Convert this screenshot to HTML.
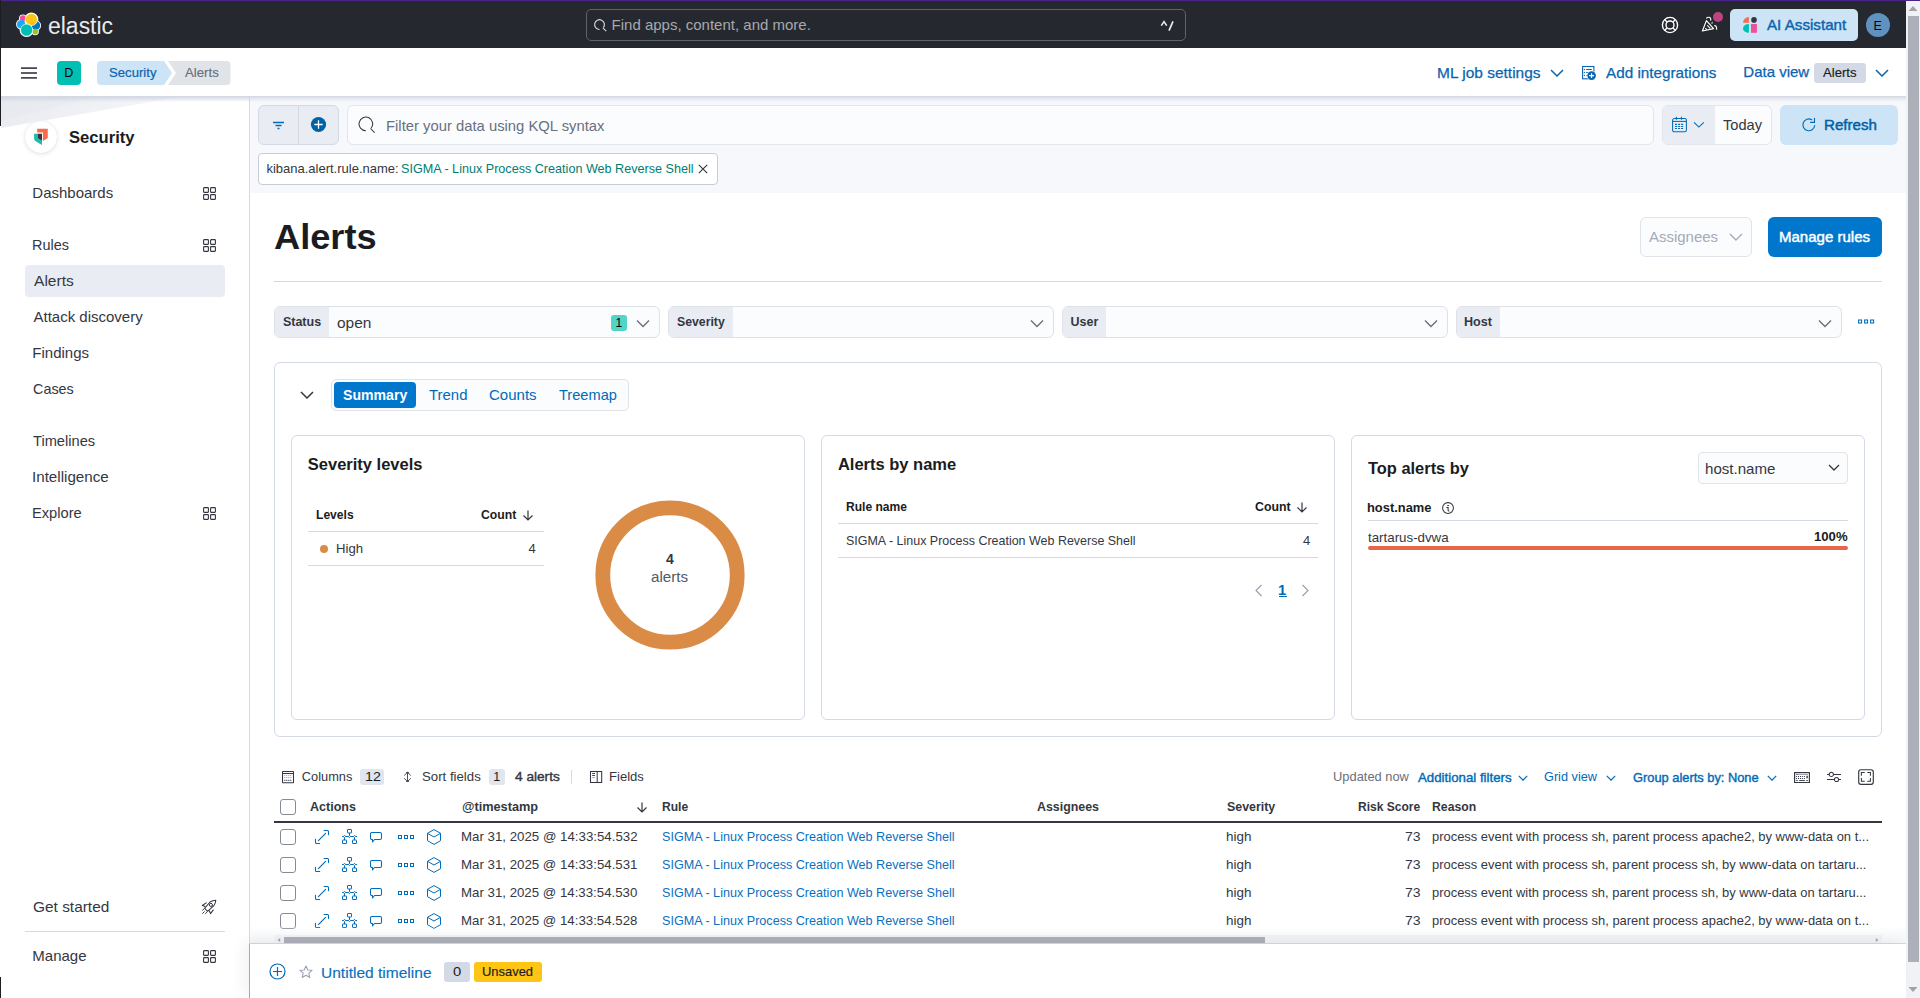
<!DOCTYPE html>
<html><head><meta charset="utf-8"><title>Alerts - Kibana</title>
<style>
html,body{margin:0;padding:0;width:1920px;height:998px;overflow:hidden;background:#fff;}
body{position:relative;font-family:"Liberation Sans",sans-serif;}
.t{position:absolute;white-space:nowrap;line-height:1;}
.b{position:absolute;display:block;}
</style></head><body>
<div class="b" style="left:0px;top:0px;width:1906px;height:48px;background:#25282f;"></div>
<div class="b" style="left:0px;top:0px;width:1920px;height:1px;background:#4a238c;"></div>
<div class="b" style="left:0px;top:0px;width:1px;height:126px;background:#1d1e22;"></div>
<svg class="b" style="left:16px;top:12px;" width="26" height="26" viewBox="0 0 26 26">
<g fill="#fff" stroke="#fff" stroke-width="1.8"><circle cx="6.9" cy="6.3" r="3"/><circle cx="5.2" cy="12.2" r="4.3"/><circle cx="19.8" cy="13.4" r="4.4"/><circle cx="19.2" cy="19.6" r="2.8"/><circle cx="15.35" cy="7.5" r="6.1"/><circle cx="10.6" cy="18.1" r="6.1"/></g>
<circle cx="6.9" cy="6.3" r="3" fill="#f04e98"/>
<circle cx="5.2" cy="12.2" r="4.3" fill="#1ba9f5"/>
<circle cx="19.8" cy="13.4" r="4.4" fill="#0077cc"/>
<circle cx="19.2" cy="19.6" r="2.8" fill="#93c90e"/>
<circle cx="15.35" cy="7.5" r="6.1" fill="#fec514" stroke="#fff" stroke-width="0.7"/>
<circle cx="10.6" cy="18.1" r="6.1" fill="#00bfb3" stroke="#fff" stroke-width="0.7"/>
</svg>
<div class="t" style="left:48.48px;top:15px;font-size:23.5px;color:#ebebeb;transform:scaleX(0.9770);transform-origin:0 0;">elastic</div>
<div class="b" style="left:586px;top:9px;width:600px;height:32px;border:1px solid #5f636b;border-radius:5px;box-sizing:border-box;background:#25282f;"></div>
<svg class="b" style="left:593px;top:18px;" width="15" height="15" viewBox="0 0 15 15"><path d="M6.6 11.5 A4.9 4.9 0 1 1 10.35 9.65" fill="none" stroke="#d4d6da" stroke-width="1.15"/><path d="M9.9 9.9 L13.3 13.2" stroke="#d4d6da" stroke-width="1.15"/></svg>
<div class="t" style="left:611.55px;top:17px;font-size:15px;color:#a7a9ae;">Find apps, content, and more.</div>
<svg class="b" style="left:1159px;top:19px;" width="16" height="14" viewBox="0 0 16 14"><path d="M2.3 6.6 L5 2.6 L7.7 6.6" fill="none" stroke="#e8ebf0" stroke-width="1.6"/><path d="M10 11.6 L14 2.4" stroke="#e8ebf0" stroke-width="1.7"/></svg>
<svg class="b" style="left:1661px;top:16px;" width="18" height="18" viewBox="0 0 18 18"><circle cx="9" cy="9" r="7.6" fill="none" stroke="#fff" stroke-width="1.4"/><circle cx="9" cy="9" r="4" fill="none" stroke="#fff" stroke-width="1.4"/><path d="M3.6 3.6L6.2 6.2M14.4 3.6L11.8 6.2M3.6 14.4L6.2 11.8M14.4 14.4L11.8 11.8" stroke="#fff" stroke-width="1.4"/></svg>
<svg class="b" style="left:1700px;top:15px;" width="20" height="20" viewBox="0 0 20 20"><path d="M2.4 16 L6.4 5.6 L13.6 13.6 Z" fill="none" stroke="#fff" stroke-width="1.2" stroke-linejoin="round"/><path d="M7.3 10.3 L10.3 13.3 M5.3 13.2 L6.8 14.6" stroke="#fff" stroke-width="1.1"/><path d="M6.2 3.4 Q8.2 1.6 10 2.6 Q11.2 3.6 10.6 5.6" fill="none" stroke="#fff" stroke-width="1.2"/><path d="M14.3 10.6 Q16.9 10.2 16.6 14.8" fill="none" stroke="#fff" stroke-width="1.2"/><path d="M10.6 8.6 L12.6 6.6 L12.9 8.4 Z" fill="#cfd2d6"/></svg>
<div class="b" style="left:1712.8px;top:11.7px;width:10.4px;height:10.4px;border-radius:50%;background:#bf4380;"></div>
<div class="b" style="left:1730px;top:9px;width:128px;height:32px;background:#cce4f5;border-radius:5px;"></div>
<svg class="b" style="left:1742px;top:16px;" width="17" height="18" viewBox="0 0 17 18"><path d="M6.9 1 V6.8 H1 A5.9 5.8 0 0 1 6.9 1 Z" fill="#f86b4b"/><circle cx="12" cy="3.9" r="2.8" fill="#343741"/><path d="M6.9 8 V16.8 A5.9 4.4 0 0 1 6.9 8 Z" fill="#00bfb3"/><rect x="9" y="8" width="5.9" height="8.8" fill="#f04e98"/></svg>
<div class="t" style="left:1766.70px;top:18px;font-size:14.8px;color:#0b64b0;transform:scaleX(1.0249);transform-origin:0 0;-webkit-text-stroke:0.4px #0b64b0;">AI Assistant</div>
<div class="b" style="left:1866px;top:13px;width:24px;height:24px;border-radius:50%;background:#6092c0;"></div>
<div class="t" style="left:1873.59px;top:20px;font-size:12.5px;color:#000;">E</div>
<div class="b" style="left:1906px;top:1px;width:14px;height:997px;background:#f1f2f6;"></div>
<div class="b" style="left:1908px;top:16px;width:11px;height:946px;background:#adb0b9;"></div>
<svg class="b" style="left:1908px;top:5px;" width="10" height="7" viewBox="0 0 10 7"><path d="M0.5 6 L5 1 L9.5 6 Z" fill="#a3a3a3"/></svg>
<svg class="b" style="left:1908px;top:986px;" width="10" height="7" viewBox="0 0 10 7"><path d="M0.5 1 L5 6 L9.5 1 Z" fill="#a3a3a3"/></svg>
<div class="b" style="left:1px;top:48px;width:1905px;height:48px;background:#fff;"></div>
<div class="b" style="left:1px;top:96px;width:1905px;height:1px;background:#d3dae6;"></div>
<svg class="b" style="left:21px;top:67px;" width="16" height="12" viewBox="0 0 16 12"><rect x="0" y="0.3" width="16" height="1.6" fill="#343741"/><rect x="0" y="5.2" width="16" height="1.6" fill="#343741"/><rect x="0" y="10.1" width="16" height="1.6" fill="#343741"/></svg>
<div class="b" style="left:57px;top:61px;width:24px;height:24px;background:#00bfb3;border-radius:4px;"></div>
<div class="t" style="left:64.28px;top:67px;font-size:12.5px;color:#000;">D</div>
<svg class="b" style="left:97px;top:61px;" width="134" height="24" viewBox="0 0 134 24"><path d="M4 0 H67 L75 12 L67 24 H4 A4 4 0 0 1 0 20 V4 A4 4 0 0 1 4 0 Z" fill="#cce4f5"/><path d="M71 0 H129.5 A4 4 0 0 1 133.5 4 V20 A4 4 0 0 1 129.5 24 H71 L79 12 Z" fill="#e0e3e8"/></svg>
<div class="t" style="left:108.81px;top:66px;font-size:13px;color:#0b64b0;transform:scaleX(1.0109);transform-origin:0 0;-webkit-text-stroke:0.2px #0b64b0;">Security</div>
<div class="t" style="left:184.75px;top:66px;font-size:13px;color:#69707d;transform:scaleX(1.0150);transform-origin:0 0;-webkit-text-stroke:0.15px #69707d;">Alerts</div>
<div class="t" style="left:1437.26px;top:65px;font-size:15px;color:#0b64b0;transform:scaleX(1.0322);transform-origin:0 0;-webkit-text-stroke:0.25px #0b64b0;">ML job settings</div>
<svg class="b" style="left:1550px;top:69px;" width="14" height="8" viewBox="0 0 14 8"><path d="M1 1 L7 7 L13 1" fill="none" stroke="#0b64b0" stroke-width="1.5"/></svg>
<svg class="b" style="left:1581px;top:65px;" width="17" height="17" viewBox="0 0 17 17"><rect x="1.6" y="1.5" width="11.3" height="12.3" fill="none" stroke="#0b64b0" stroke-width="1.1"/><circle cx="3.4" cy="4.5" r="0.65" fill="#0b64b0"/><circle cx="3.4" cy="7.5" r="0.65" fill="#0b64b0"/><circle cx="3.4" cy="10.5" r="0.65" fill="#0b64b0"/><path d="M5.2 4.5 H10.8 M5.2 7.5 H8 M5.2 10.5 H7" stroke="#0b64b0" stroke-width="1.05"/><circle cx="10.6" cy="10.6" r="4.9" fill="#fff"/><circle cx="10.6" cy="10.6" r="4.3" fill="#0b64b0"/><path d="M10.6 8.2 V13 M8.2 10.6 H13" stroke="#fff" stroke-width="1.15"/></svg>
<div class="t" style="left:1605.50px;top:65px;font-size:15px;color:#0b64b0;transform:scaleX(1.0181);transform-origin:0 0;-webkit-text-stroke:0.25px #0b64b0;">Add integrations</div>
<div class="t" style="left:1743.30px;top:64px;font-size:15px;color:#0b64b0;-webkit-text-stroke:0.25px #0b64b0;">Data view</div>
<div class="b" style="left:1814px;top:63px;width:52px;height:20px;background:#d3dae6;border-radius:3px;"></div>
<div class="t" style="left:1823.00px;top:67px;font-size:12.5px;color:#1a1c21;transform:scaleX(1.0476);transform-origin:0 0;-webkit-text-stroke:0.15px #1a1c21;">Alerts</div>
<svg class="b" style="left:1875px;top:69px;" width="14" height="8" viewBox="0 0 14 8"><path d="M1 1 L7 7 L13 1" fill="none" stroke="#0b64b0" stroke-width="1.5"/></svg>
<div class="b" style="left:1px;top:97px;width:248px;height:901px;background:#fff;"></div>
<div class="b" style="left:249px;top:97px;width:1px;height:901px;background:#d3dae6;"></div>
<div class="b" style="left:25px;top:121px;width:32px;height:32px;border-radius:50%;background:#fff;box-shadow:0 1px 4px rgba(0,0,0,0.12), 0 0 1px rgba(0,0,0,0.1);"></div>
<svg class="b" style="left:33px;top:128px;" width="16" height="18" viewBox="0 0 16 18"><path d="M4.2 0.85 H14.75 V10 L9.9 12.9 V4.4 H4.2 Z" fill="#f86b4b"/><path d="M1.1 5.8 H4.8 V10.3 L9 12.8 V16.9 L2.6 13.2 Q1.1 12.3 1.1 10.8 Z" fill="#1ebbaf"/><path d="M4.8 5.8 H9 V12.8 L4.8 10.3 Z" fill="#343741"/></svg>
<div class="t" style="left:68.90px;top:129px;font-size:16.5px;color:#1a1c21;font-weight:700;transform:scaleX(1.0060);transform-origin:0 0;">Security</div>
<div class="b" style="left:25px;top:265px;width:200px;height:32px;background:#e9edf3;border-radius:4px;"></div>
<div class="t" style="left:32.30px;top:185px;font-size:15px;color:#343741;">Dashboards</div>
<svg class="b" style="left:203px;top:186.5px;" width="13" height="13" viewBox="0 0 13 13"><rect x="0.6" y="0.6" width="4.8" height="4.8" rx="0.6" fill="none" stroke="#343741" stroke-width="1.1"/><rect x="7.6" y="0.6" width="4.8" height="4.8" rx="0.6" fill="none" stroke="#343741" stroke-width="1.1"/><rect x="0.6" y="7.6" width="4.8" height="4.8" rx="0.6" fill="none" stroke="#343741" stroke-width="1.1"/><rect x="7.6" y="7.6" width="4.8" height="4.8" rx="0.6" fill="none" stroke="#343741" stroke-width="1.1"/></svg>
<div class="t" style="left:32.35px;top:237px;font-size:15px;color:#343741;transform:scaleX(0.9617);transform-origin:0 0;">Rules</div>
<svg class="b" style="left:203px;top:238.5px;" width="13" height="13" viewBox="0 0 13 13"><rect x="0.6" y="0.6" width="4.8" height="4.8" rx="0.6" fill="none" stroke="#343741" stroke-width="1.1"/><rect x="7.6" y="0.6" width="4.8" height="4.8" rx="0.6" fill="none" stroke="#343741" stroke-width="1.1"/><rect x="0.6" y="7.6" width="4.8" height="4.8" rx="0.6" fill="none" stroke="#343741" stroke-width="1.1"/><rect x="7.6" y="7.6" width="4.8" height="4.8" rx="0.6" fill="none" stroke="#343741" stroke-width="1.1"/></svg>
<div class="t" style="left:33.50px;top:273px;font-size:15px;color:#343741;transform:scaleX(1.0370);transform-origin:0 0;">Alerts</div>
<div class="t" style="left:33.50px;top:309px;font-size:15px;color:#343741;">Attack discovery</div>
<div class="t" style="left:32.30px;top:345px;font-size:15px;color:#343741;">Findings</div>
<div class="t" style="left:32.78px;top:381px;font-size:15px;color:#343741;transform:scaleX(0.9600);transform-origin:0 0;">Cases</div>
<div class="t" style="left:33.21px;top:433px;font-size:15px;color:#343741;transform:scaleX(0.9765);transform-origin:0 0;">Timelines</div>
<div class="t" style="left:32.13px;top:469px;font-size:15px;color:#343741;transform:scaleX(1.0112);transform-origin:0 0;">Intelligence</div>
<div class="t" style="left:32.33px;top:505px;font-size:15px;color:#343741;transform:scaleX(0.9781);transform-origin:0 0;">Explore</div>
<svg class="b" style="left:203px;top:506.5px;" width="13" height="13" viewBox="0 0 13 13"><rect x="0.6" y="0.6" width="4.8" height="4.8" rx="0.6" fill="none" stroke="#343741" stroke-width="1.1"/><rect x="7.6" y="0.6" width="4.8" height="4.8" rx="0.6" fill="none" stroke="#343741" stroke-width="1.1"/><rect x="0.6" y="7.6" width="4.8" height="4.8" rx="0.6" fill="none" stroke="#343741" stroke-width="1.1"/><rect x="7.6" y="7.6" width="4.8" height="4.8" rx="0.6" fill="none" stroke="#343741" stroke-width="1.1"/></svg>
<div class="t" style="left:32.73px;top:899px;font-size:15px;color:#343741;transform:scaleX(1.0283);transform-origin:0 0;">Get started</div>
<svg class="b" style="left:201px;top:899px;" width="16" height="16" viewBox="0 0 16 16"><path d="M3.6 9.4 L9 3 Q11.8 1.3 14.8 1.2 Q14.7 4.2 12.8 6.7 L6.6 12.4 Z" fill="none" stroke="#343741" stroke-width="1.05" stroke-linejoin="round"/><path d="M5.6 3.6 L1.3 6.5 L4.3 7.6 M12.5 10.6 L9.5 14.6 L8.3 11.5" fill="none" stroke="#343741" stroke-width="1.05" stroke-linejoin="round"/><circle cx="9.9" cy="5.9" r="1.55" fill="none" stroke="#343741" stroke-width="1"/><path d="M1.3 11.4 L3.4 9.5 M1.3 14.7 L3.6 12.4 M4.3 14.7 L6.2 13" stroke="#343741" stroke-width="1"/></svg>
<div class="b" style="left:25px;top:931px;width:200px;height:1px;background:#d3dae6;"></div>
<div class="t" style="left:32.30px;top:948px;font-size:15px;color:#343741;">Manage</div>
<svg class="b" style="left:203px;top:949.5px;" width="13" height="13" viewBox="0 0 13 13"><rect x="0.6" y="0.6" width="4.8" height="4.8" rx="0.6" fill="none" stroke="#343741" stroke-width="1.1"/><rect x="7.6" y="0.6" width="4.8" height="4.8" rx="0.6" fill="none" stroke="#343741" stroke-width="1.1"/><rect x="0.6" y="7.6" width="4.8" height="4.8" rx="0.6" fill="none" stroke="#343741" stroke-width="1.1"/><rect x="7.6" y="7.6" width="4.8" height="4.8" rx="0.6" fill="none" stroke="#343741" stroke-width="1.1"/></svg>
<div class="b" style="left:0px;top:977px;width:1px;height:21px;background:#1d1e22;"></div>
<svg class="b" style="left:1px;top:97px;" width="249" height="34" viewBox="0 0 249 34"><defs><linearGradient id="wg" x1="0" y1="0" x2="1" y2="0.3"><stop offset="0" stop-color="#e3e6ed"/><stop offset="1" stop-color="#f6f7fa"/></linearGradient></defs><path d="M0 0 H178 L0 31 Z" fill="url(#wg)" opacity="0.9"/><path d="M0 0 H92 L0 24 Z" fill="#e6e9ef" opacity="0.6"/></svg>
<div class="b" style="left:1px;top:97px;width:249px;height:5px;background:linear-gradient(rgba(205,210,220,0.8),rgba(255,255,255,0));"></div>
<div class="b" style="left:250px;top:97px;width:1656px;height:96px;background:#f7f8fc;"></div>
<div class="b" style="left:250px;top:97px;width:1656px;height:5px;background:linear-gradient(rgba(200,205,215,0.55),rgba(247,248,252,0));"></div>
<div class="b" style="left:258px;top:105px;width:81px;height:40px;background:#e9edf3;border:1px solid #d3dae6;border-radius:6px;box-sizing:border-box;"></div>
<div class="b" style="left:298px;top:105px;width:1px;height:40px;background:#d3dae6;"></div>
<svg class="b" style="left:272px;top:121px;" width="13" height="9" viewBox="0 0 13 9"><path d="M1 1.5 H12 M3.5 4.5 H9.5 M5.5 7.5 H7.5" stroke="#006bb8" stroke-width="1.4"/></svg>
<svg class="b" style="left:310px;top:116px;" width="17" height="17" viewBox="0 0 17 17"><circle cx="8.5" cy="8.5" r="7.6" fill="#0061a6"/><path d="M8.5 4.3 V12.7 M4.3 8.5 H12.7" stroke="#fff" stroke-width="1.3"/></svg>
<div class="b" style="left:347px;top:105px;width:1307px;height:40px;background:#fbfcfd;border:1px solid #e1e5ec;border-radius:6px;box-sizing:border-box;"></div>
<svg class="b" style="left:358px;top:116px;" width="18" height="18" viewBox="0 0 18 18"><path d="M7.85 14.65 A6.8 6.8 0 1 1 13.06 12.22" fill="none" stroke="#343741" stroke-width="1.05"/><path d="M12.5 12.5 L16.6 16.6" stroke="#343741" stroke-width="1.05"/></svg>
<div class="t" style="left:386.31px;top:118px;font-size:15px;color:#69707d;transform:scaleX(0.9877);transform-origin:0 0;">Filter your data using KQL syntax</div>
<div class="b" style="left:1662px;top:105px;width:110px;height:40px;background:#fbfcfd;border:1px solid #e1e5ec;border-radius:6px;box-sizing:border-box;"></div>
<div class="b" style="left:1663px;top:106px;width:52px;height:38px;background:#e9edf3;border-radius:5px 0 0 5px;"></div>
<svg class="b" style="left:1671px;top:116px;" width="16" height="17" viewBox="0 0 16 17"><rect x="1.6" y="2.5" width="13.8" height="13.3" rx="1.8" fill="none" stroke="#006bb8" stroke-width="1.05"/><path d="M1.6 5.4 H15.4" stroke="#006bb8" stroke-width="1.05"/><path d="M5.4 0.8 V3.8 M10.5 0.8 V3.8" stroke="#006bb8" stroke-width="1.1"/><path d="M4 8.4 h2 M7.1 8.4 h2 M10.1 8.4 h2 M4 10.5 h2 M7.1 10.5 h2 M10.1 10.5 h2 M4 12.5 h2 M7.1 12.5 h2 M10.1 12.5 h2" stroke="#006bb8" stroke-width="1.1"/></svg>
<svg class="b" style="left:1693px;top:121px;" width="12" height="8" viewBox="0 0 12 8"><path d="M1 1.3 L5.9 6.1 L10.8 1.3" fill="none" stroke="#006bb8" stroke-width="1.1"/></svg>
<div class="t" style="left:1723.41px;top:118px;font-size:14.5px;color:#343741;transform:scaleX(1.0072);transform-origin:0 0;">Today</div>
<div class="b" style="left:1780px;top:105px;width:118px;height:40px;background:#cce4f5;border-radius:6px;"></div>
<svg class="b" style="left:1801px;top:117px;" width="16" height="16" viewBox="0 0 16 16"><path d="M13.68 8.6 A5.9 5.9 0 1 1 10.75 2.69" fill="none" stroke="#006bb8" stroke-width="1.1" stroke-linecap="round"/><path d="M13.5 1.2 V5.4 H9.6" fill="none" stroke="#006bb8" stroke-width="1.1" stroke-linecap="round"/></svg>
<div class="t" style="left:1824.39px;top:118px;font-size:14.8px;color:#0061a6;transform:scaleX(1.0211);transform-origin:0 0;-webkit-text-stroke:0.45px #0061a6;">Refresh</div>
<div class="b" style="left:258px;top:153px;width:460px;height:32px;background:#fff;border:1px solid #c6ccd6;border-radius:4px;box-sizing:border-box;"></div>
<div class="t" style="left:266.40px;top:162px;font-size:13px;color:#343741;">kibana.alert.rule.name:</div>
<div class="t" style="left:401.03px;top:162px;font-size:13px;color:#017d73;transform:scaleX(0.9694);transform-origin:0 0;">SIGMA - Linux Process Creation Web Reverse Shell</div>
<svg class="b" style="left:698px;top:164px;" width="10" height="10" viewBox="0 0 10 10"><path d="M0.8 0.8 L9.2 9.2 M9.2 0.8 L0.8 9.2" stroke="#343741" stroke-width="1.1"/></svg>
<div class="b" style="left:250px;top:193px;width:1656px;height:750px;background:#fff;"></div>
<div class="t" style="left:273.99px;top:219px;font-size:35px;color:#1a1c21;font-weight:700;transform:scaleX(1.0346);transform-origin:0 0;">Alerts</div>
<div class="b" style="left:1640px;top:217px;width:112px;height:40px;background:#fbfcfd;border:1px solid #e0e3e8;border-radius:6px;box-sizing:border-box;"></div>
<div class="t" style="left:1649.40px;top:230px;font-size:14.8px;color:#a2abba;transform:scaleX(1.0106);transform-origin:0 0;">Assignees</div>
<svg class="b" style="left:1729px;top:233px;" width="14" height="8" viewBox="0 0 14 8"><path d="M1 1 L7 7 L13 1" fill="none" stroke="#a2abba" stroke-width="1.4"/></svg>
<div class="b" style="left:1768px;top:217px;width:114px;height:40px;background:#0077cc;border-radius:6px;"></div>
<div class="t" style="left:1779.30px;top:230px;font-size:14.8px;color:#ffffff;transform:scaleX(1.0149);transform-origin:0 0;-webkit-text-stroke:0.45px #ffffff;">Manage rules</div>
<div class="b" style="left:274px;top:281px;width:1608px;height:1px;background:#d3dae6;"></div>
<div class="b" style="left:274px;top:306px;width:386px;height:32px;background:#fbfcfd;border:1px solid #dde1e8;border-radius:6px;box-sizing:border-box;"></div>
<div class="b" style="left:275px;top:307px;width:54px;height:30px;background:#e9edf3;border-radius:5px 0 0 5px;"></div>
<div class="t" style="left:282.93px;top:316px;font-size:12.5px;color:#343741;font-weight:700;">Status</div>
<svg class="b" style="left:636px;top:319px;" width="14" height="9" viewBox="0 0 14 9"><path d="M1 1.5 L7 7.5 L13 1.5" fill="none" stroke="#69707d" stroke-width="1.4"/></svg>
<div class="b" style="left:668px;top:306px;width:386px;height:32px;background:#fbfcfd;border:1px solid #dde1e8;border-radius:6px;box-sizing:border-box;"></div>
<div class="b" style="left:669px;top:307px;width:64px;height:30px;background:#e9edf3;border-radius:5px 0 0 5px;"></div>
<div class="t" style="left:676.93px;top:316px;font-size:12.5px;color:#343741;font-weight:700;transform:scaleX(0.9816);transform-origin:0 0;">Severity</div>
<svg class="b" style="left:1030px;top:319px;" width="14" height="9" viewBox="0 0 14 9"><path d="M1 1.5 L7 7.5 L13 1.5" fill="none" stroke="#69707d" stroke-width="1.4"/></svg>
<div class="b" style="left:1062px;top:306px;width:386px;height:32px;background:#fbfcfd;border:1px solid #dde1e8;border-radius:6px;box-sizing:border-box;"></div>
<div class="b" style="left:1063px;top:307px;width:43px;height:30px;background:#e9edf3;border-radius:5px 0 0 5px;"></div>
<div class="t" style="left:1070.55px;top:316px;font-size:12.5px;color:#343741;font-weight:700;">User</div>
<svg class="b" style="left:1424px;top:319px;" width="14" height="9" viewBox="0 0 14 9"><path d="M1 1.5 L7 7.5 L13 1.5" fill="none" stroke="#69707d" stroke-width="1.4"/></svg>
<div class="b" style="left:1456px;top:306px;width:386px;height:32px;background:#fbfcfd;border:1px solid #dde1e8;border-radius:6px;box-sizing:border-box;"></div>
<div class="b" style="left:1457px;top:307px;width:43px;height:30px;background:#e9edf3;border-radius:5px 0 0 5px;"></div>
<div class="t" style="left:1464.48px;top:316px;font-size:12.5px;color:#343741;font-weight:700;transform:scaleX(1.0070);transform-origin:0 0;">Host</div>
<svg class="b" style="left:1818px;top:319px;" width="14" height="9" viewBox="0 0 14 9"><path d="M1 1.5 L7 7.5 L13 1.5" fill="none" stroke="#69707d" stroke-width="1.4"/></svg>
<div class="t" style="left:336.58px;top:316px;font-size:14.7px;color:#343741;transform:scaleX(1.0525);transform-origin:0 0;">open</div>
<div class="b" style="left:611px;top:315px;width:16px;height:16px;background:#54d3c9;border-radius:3px;"></div>
<div class="t" style="left:615.49px;top:317px;font-size:12px;color:#000;">1</div>
<svg class="b" style="left:1858px;top:319px;" width="17" height="6" viewBox="0 0 17 6"><rect x="0.6" y="1" width="3" height="3" fill="none" stroke="#006bb8" stroke-width="1.05"/><rect x="6.6" y="1" width="3" height="3" fill="none" stroke="#006bb8" stroke-width="1.05"/><rect x="12.6" y="1" width="3" height="3" fill="none" stroke="#006bb8" stroke-width="1.05"/></svg>
<div class="b" style="left:274px;top:362px;width:1608px;height:375px;border:1px solid #d3dae6;border-radius:6px;box-sizing:border-box;"></div>
<svg class="b" style="left:300px;top:391px;" width="14" height="8" viewBox="0 0 14 8"><path d="M1 1 L7 7 L13 1" fill="none" stroke="#343741" stroke-width="1.5"/></svg>
<div class="b" style="left:331px;top:379px;width:298px;height:32px;background:#fbfcfd;border:1px solid #e0e3e8;border-radius:5px;box-sizing:border-box;"></div>
<div class="b" style="left:334px;top:382px;width:82px;height:26px;background:#0077cc;border-radius:4px;"></div>
<div class="t" style="left:342.68px;top:388px;font-size:14.5px;color:#fff;font-weight:700;transform:scaleX(0.9719);transform-origin:0 0;">Summary</div>
<div class="t" style="left:428.90px;top:388px;font-size:14.5px;color:#006bb8;transform:scaleX(1.0303);transform-origin:0 0;">Trend</div>
<div class="t" style="left:488.95px;top:388px;font-size:14.5px;color:#006bb8;transform:scaleX(1.0350);transform-origin:0 0;">Counts</div>
<div class="t" style="left:558.91px;top:388px;font-size:14.5px;color:#006bb8;transform:scaleX(1.0067);transform-origin:0 0;">Treemap</div>
<div class="b" style="left:291px;top:435px;width:514px;height:285px;border:1px solid #d3dae6;border-radius:6px;box-sizing:border-box;"></div>
<div class="b" style="left:821px;top:435px;width:514px;height:285px;border:1px solid #d3dae6;border-radius:6px;box-sizing:border-box;"></div>
<div class="b" style="left:1351px;top:435px;width:514px;height:285px;border:1px solid #d3dae6;border-radius:6px;box-sizing:border-box;"></div>
<div class="t" style="left:307.80px;top:456px;font-size:16.5px;color:#1a1c21;font-weight:700;">Severity levels</div>
<div class="t" style="left:315.51px;top:509px;font-size:12.5px;color:#1a1c21;font-weight:700;transform:scaleX(0.9664);transform-origin:0 0;">Levels</div>
<div class="t" style="left:480.71px;top:509px;font-size:12.5px;color:#1a1c21;font-weight:700;transform:scaleX(0.9764);transform-origin:0 0;">Count</div>
<svg class="b" style="left:521.5px;top:509.5px;" width="12" height="11" viewBox="0 0 12 11"><path d="M6 0.5 V10 M1.5 5.5 L6 10 L10.5 5.5" fill="none" stroke="#343741" stroke-width="1.2"/></svg>
<div class="b" style="left:308px;top:531px;width:236px;height:1px;background:#d3dae6;"></div>
<div class="b" style="left:320px;top:545px;width:8px;height:8px;border-radius:50%;background:#da8b45;"></div>
<div class="t" style="left:335.55px;top:542px;font-size:13px;color:#343741;transform:scaleX(1.0109);transform-origin:0 0;">High</div>
<div class="t" style="left:528.47px;top:542px;font-size:13px;color:#343741;">4</div>
<div class="b" style="left:308px;top:565px;width:236px;height:1px;background:#d3dae6;"></div>
<svg class="b" style="left:595px;top:500px;" width="150" height="150" viewBox="0 0 150 150"><circle cx="75" cy="75" r="67.2" fill="none" stroke="#da8b45" stroke-width="14.8"/></svg>
<div class="t" style="left:665.94px;top:552px;font-size:14px;color:#343741;font-weight:700;">4</div>
<div class="t" style="left:651.19px;top:570px;font-size:14px;color:#535966;transform:scaleX(1.0850);transform-origin:0 0;">alerts</div>
<div class="t" style="left:837.89px;top:456px;font-size:16.5px;color:#1a1c21;font-weight:700;">Alerts by name</div>
<div class="t" style="left:845.52px;top:501px;font-size:12.5px;color:#1a1c21;font-weight:700;transform:scaleX(0.9639);transform-origin:0 0;">Rule name</div>
<div class="t" style="left:1254.51px;top:501px;font-size:12.5px;color:#1a1c21;font-weight:700;transform:scaleX(0.9877);transform-origin:0 0;">Count</div>
<svg class="b" style="left:1295.5px;top:501.5px;" width="12" height="11" viewBox="0 0 12 11"><path d="M6 0.5 V10 M1.5 5.5 L6 10 L10.5 5.5" fill="none" stroke="#343741" stroke-width="1.2"/></svg>
<div class="b" style="left:838px;top:523px;width:480px;height:1px;background:#d3dae6;"></div>
<div class="t" style="left:845.74px;top:534px;font-size:13px;color:#343741;transform:scaleX(0.9594);transform-origin:0 0;">SIGMA - Linux Process Creation Web Reverse Shell</div>
<div class="t" style="left:1302.92px;top:534px;font-size:13px;color:#343741;">4</div>
<div class="b" style="left:838px;top:557px;width:480px;height:1px;background:#d3dae6;"></div>
<svg class="b" style="left:1254px;top:584px;" width="9" height="13" viewBox="0 0 9 13"><path d="M7.5 1 L2 6.5 L7.5 12" fill="none" stroke="#98a2b3" stroke-width="1.2"/></svg>
<div class="t" style="left:1278.47px;top:583px;font-size:14.5px;color:#006bb8;font-weight:700;transform:scaleX(1.0125);transform-origin:0 0;">1</div>
<div class="b" style="left:1279px;top:596px;width:8px;height:1px;background:#006bb8;"></div>
<svg class="b" style="left:1301px;top:584px;" width="9" height="13" viewBox="0 0 9 13"><path d="M1.5 1 L7 6.5 L1.5 12" fill="none" stroke="#98a2b3" stroke-width="1.2"/></svg>
<div class="t" style="left:1368.14px;top:460px;font-size:16.5px;color:#1a1c21;font-weight:700;transform:scaleX(0.9948);transform-origin:0 0;">Top alerts by</div>
<div class="b" style="left:1698px;top:452px;width:150px;height:32px;background:#fbfcfd;border:1px solid #e0e3e8;border-radius:4px;box-sizing:border-box;"></div>
<div class="t" style="left:1705.14px;top:462px;font-size:14.2px;color:#343741;transform:scaleX(1.0637);transform-origin:0 0;">host.name</div>
<svg class="b" style="left:1828px;top:464px;" width="12" height="8" viewBox="0 0 12 8"><path d="M1 1 L6 6 L11 1" fill="none" stroke="#343741" stroke-width="1.3"/></svg>
<div class="t" style="left:1367.40px;top:501px;font-size:13px;color:#1a1c21;font-weight:700;transform:scaleX(0.9916);transform-origin:0 0;">host.name</div>
<svg class="b" style="left:1442px;top:502px;" width="12" height="12" viewBox="0 0 12 12"><circle cx="6" cy="6" r="5.4" fill="none" stroke="#343741" stroke-width="1.05"/><path d="M4.3 5.4 H6.1 V8.4 Q6.2 9.1 7.3 9.2" fill="none" stroke="#343741" stroke-width="1.05"/><rect x="5.3" y="3" width="1.6" height="1.1" fill="#343741"/></svg>
<div class="b" style="left:1368px;top:520px;width:480px;height:1px;background:#d3dae6;"></div>
<div class="t" style="left:1368.10px;top:531px;font-size:13px;color:#343741;transform:scaleX(1.0239);transform-origin:0 0;">tartarus-dvwa</div>
<div class="t" style="left:1813.91px;top:531px;font-size:12.5px;color:#1a1c21;font-weight:700;transform:scaleX(1.0505);transform-origin:0 0;">100%</div>
<div class="b" style="left:1368px;top:546px;width:480px;height:4px;background:#e7664c;border-radius:2px;"></div>
<svg class="b" style="left:281px;top:770px;" width="14" height="14" viewBox="0 0 14 14"><rect x="1.5" y="1.5" width="11" height="11.2" rx="0.5" fill="none" stroke="#343741" stroke-width="1.05"/><path d="M1.5 3.5 H12.5" stroke="#343741" stroke-width="1"/><path d="M3 5.6 H11 M3 7.6 H11" stroke="#9aa0aa" stroke-width="0.8" stroke-dasharray="1.4 0.6"/><path d="M3 10.3 H11" stroke="#343741" stroke-width="0.9" stroke-dasharray="1.4 0.6"/></svg>
<div class="t" style="left:301.86px;top:771px;font-size:12.8px;color:#343741;">Columns</div>
<div class="b" style="left:360px;top:769px;width:24px;height:16px;background:#e0e5ee;border-radius:3px;"></div>
<div class="t" style="left:364.53px;top:771px;font-size:12.5px;color:#1a1c21;transform:scaleX(1.1371);transform-origin:0 0;">12</div>
<svg class="b" style="left:403px;top:771px;" width="9" height="12" viewBox="0 0 9 12"><path d="M4.5 1.6 V10.4 M3 1.6 H6 M3 10.4 H6 M1.2 4.5 L4.5 1.3 L7.8 4.5 M1.2 7.3 L4.5 10.5 L7.8 7.3" fill="none" stroke="#4a4f5a" stroke-width="1"/></svg>
<div class="t" style="left:422.01px;top:771px;font-size:12.8px;color:#343741;transform:scaleX(1.0327);transform-origin:0 0;">Sort fields</div>
<div class="b" style="left:489px;top:769px;width:16px;height:16px;background:#e0e5ee;border-radius:3px;"></div>
<div class="t" style="left:493.34px;top:771px;font-size:12.5px;color:#1a1c21;">1</div>
<div class="t" style="left:514.93px;top:770px;font-size:13px;color:#343741;transform:scaleX(1.0495);transform-origin:0 0;-webkit-text-stroke:0.4px #343741;">4 alerts</div>
<div class="b" style="left:571px;top:770px;width:1px;height:14px;background:#d3dae6;"></div>
<svg class="b" style="left:589px;top:770px;" width="14" height="14" viewBox="0 0 14 14"><rect x="1.5" y="1.5" width="11.2" height="11" fill="none" stroke="#343741" stroke-width="1.05"/><path d="M8.2 1.5 V12.5" stroke="#343741" stroke-width="1"/><path d="M3.1 3.5 H6 M3.1 5.5 H6" stroke="#343741" stroke-width="0.9"/><path d="M3.1 7.6 H6" stroke="#9aa0aa" stroke-width="0.9"/></svg>
<div class="t" style="left:609.45px;top:771px;font-size:12.8px;color:#343741;transform:scaleX(1.0213);transform-origin:0 0;">Fields</div>
<div class="t" style="left:1333.03px;top:771px;font-size:12.8px;color:#69707d;transform:scaleX(1.0068);transform-origin:0 0;">Updated now</div>
<div class="t" style="left:1418.10px;top:771px;font-size:13px;color:#006bb8;transform:scaleX(1.0200);transform-origin:0 0;-webkit-text-stroke:0.4px #006bb8;">Additional filters</div>
<svg class="b" style="left:1517.5px;top:775px;" width="10" height="6" viewBox="0 0 10 6"><path d="M0.8 0.8 L5.0 5.2 L9.2 0.8" fill="none" stroke="#006bb8" stroke-width="1.2"/></svg>
<div class="t" style="left:1543.56px;top:771px;font-size:12.8px;color:#006bb8;transform:scaleX(0.9936);transform-origin:0 0;">Grid view</div>
<svg class="b" style="left:1606px;top:775px;" width="10" height="6" viewBox="0 0 10 6"><path d="M0.8 0.8 L5.0 5.2 L9.2 0.8" fill="none" stroke="#006bb8" stroke-width="1.2"/></svg>
<div class="t" style="left:1632.76px;top:771px;font-size:13px;color:#006bb8;transform:scaleX(0.9880);transform-origin:0 0;-webkit-text-stroke:0.4px #006bb8;">Group alerts by: None</div>
<svg class="b" style="left:1767px;top:775px;" width="10" height="6" viewBox="0 0 10 6"><path d="M0.8 0.8 L5.0 5.2 L9.2 0.8" fill="none" stroke="#006bb8" stroke-width="1.2"/></svg>
<svg class="b" style="left:1794px;top:772px;" width="16" height="11" viewBox="0 0 16 11"><rect x="0.6" y="0.6" width="14.8" height="10" fill="none" stroke="#343741" stroke-width="1.15"/><rect x="2.2" y="1.9" width="1.6" height="0.9" fill="#343741"/><rect x="4.5" y="1.9" width="1" height="1" fill="#343741"/><rect x="6.5" y="1.9" width="1" height="1" fill="#343741"/><rect x="8.5" y="1.9" width="1" height="1" fill="#343741"/><rect x="10.5" y="1.9" width="1" height="1" fill="#343741"/><rect x="12.4" y="1.9" width="1" height="1" fill="#343741"/><rect x="2.1" y="4.0" width="1" height="1" fill="#343741"/><rect x="4.0" y="4.0" width="1" height="1" fill="#343741"/><rect x="6.0" y="4.0" width="1" height="1" fill="#343741"/><rect x="7.9" y="4.0" width="1" height="1" fill="#343741"/><rect x="9.9" y="4.0" width="1" height="1" fill="#343741"/><rect x="2.1" y="6.0" width="1" height="1" fill="#343741"/><rect x="4.0" y="6.0" width="1" height="1" fill="#343741"/><rect x="6.0" y="6.0" width="1" height="1" fill="#343741"/><rect x="7.9" y="6.0" width="1" height="1" fill="#343741"/><rect x="9.9" y="6.0" width="1" height="1" fill="#343741"/><rect x="12.4" y="3.7" width="1.4" height="2.6" fill="#343741"/><rect x="2.2" y="8" width="1.6" height="0.9" fill="#343741"/><rect x="5.2" y="8" width="5.7" height="0.9" fill="#343741"/><rect x="12.3" y="8" width="1.6" height="0.9" fill="#343741"/></svg>
<svg class="b" style="left:1826px;top:771px;" width="16" height="11" viewBox="0 0 16 11"><path d="M1 3.4 H15 M1 8.5 H15" stroke="#343741" stroke-width="1.05"/><circle cx="5.35" cy="3.4" r="2.1" fill="#fff" stroke="#343741" stroke-width="1.05"/><circle cx="10.5" cy="8.5" r="2.1" fill="#fff" stroke="#343741" stroke-width="1.05"/></svg>
<svg class="b" style="left:1858px;top:769px;" width="16" height="16" viewBox="0 0 16 16"><rect x="0.7" y="0.7" width="14.6" height="14.6" rx="2.3" fill="none" stroke="#343741" stroke-width="1.15"/><path d="M3.4 6.7 V3.5 H6.7 M9.3 3.5 H12.4 V6.7 M3.4 9.1 V12.3 H6.7 M9.3 12.3 H12.4 V9.1" fill="none" stroke="#343741" stroke-width="1.05"/></svg>
<div class="b" style="left:280px;top:799px;width:16px;height:16px;box-sizing:border-box;border:1px solid #858b96;border-radius:3px;background:#fff;"></div>
<div class="t" style="left:310.09px;top:801px;font-size:12.5px;color:#343741;font-weight:700;">Actions</div>
<div class="t" style="left:461.70px;top:801px;font-size:12.5px;color:#343741;font-weight:700;transform:scaleX(1.0190);transform-origin:0 0;">@timestamp</div>
<svg class="b" style="left:636px;top:802px;" width="12" height="11" viewBox="0 0 12 11"><path d="M6 0.5 V10 M1.5 5.5 L6 10 L10.5 5.5" fill="none" stroke="#343741" stroke-width="1.2"/></svg>
<div class="t" style="left:661.62px;top:801px;font-size:12.5px;color:#343741;font-weight:700;transform:scaleX(0.9646);transform-origin:0 0;">Rule</div>
<div class="t" style="left:1037.09px;top:801px;font-size:12.5px;color:#343741;font-weight:700;transform:scaleX(0.9905);transform-origin:0 0;">Assignees</div>
<div class="t" style="left:1226.93px;top:801px;font-size:12.5px;color:#343741;font-weight:700;transform:scaleX(0.9920);transform-origin:0 0;">Severity</div>
<div class="t" style="left:1357.82px;top:801px;font-size:12.5px;color:#343741;font-weight:700;transform:scaleX(0.9625);transform-origin:0 0;">Risk Score</div>
<div class="t" style="left:1431.81px;top:801px;font-size:12.5px;color:#343741;font-weight:700;transform:scaleX(0.9779);transform-origin:0 0;">Reason</div>
<div class="b" style="left:274px;top:821px;width:1608px;height:2px;background:#343741;"></div>
<div class="b" style="left:280px;top:829px;width:16px;height:16px;box-sizing:border-box;border:1px solid #858b96;border-radius:3px;background:#fff;"></div>
<svg class="b" style="left:314px;top:829px;" width="16" height="16" viewBox="0 0 16 16"><path d="M4.4 11.6 L11.6 4.3 M10.1 1.5 H13.4 Q14.5 1.5 14.5 2.6 V5.6 M1.5 10.2 V13.4 Q1.5 14.5 2.6 14.5 H5.7" fill="none" stroke="#006bb8" stroke-width="1.1" stroke-linecap="round"/></svg>
<svg class="b" style="left:341px;top:829px;" width="17" height="16" viewBox="0 0 17 16"><rect x="6.5" y="0.5" width="4" height="3.5" rx="0.4" fill="none" stroke="#006bb8" stroke-width="1"/><path d="M8.5 4 V7.5 M1 7.5 H16" stroke="#006bb8" stroke-width="1"/><path d="M3.5 6.3 L4.7 7.5 L3.5 8.7 L2.3 7.5 Z M8.5 6.3 L9.7 7.5 L8.5 8.7 L7.3 7.5 Z M13.5 6.3 L14.7 7.5 L13.5 8.7 L12.3 7.5 Z" fill="#fff" stroke="#006bb8" stroke-width="0.9"/><path d="M3.5 8.7 V11 M13.5 8.7 V11" stroke="#006bb8" stroke-width="1"/><rect x="1.5" y="11" width="4" height="3.5" rx="0.4" fill="none" stroke="#006bb8" stroke-width="1"/><rect x="11.5" y="11" width="4" height="3.5" rx="0.4" fill="none" stroke="#006bb8" stroke-width="1"/></svg>
<svg class="b" style="left:369px;top:831px;" width="14" height="13" viewBox="0 0 14 13"><path d="M3 1.5 H11 Q12.5 1.5 12.5 3 V7 Q12.5 8.5 11 8.5 H5.5 L3.5 11 V8.5 H3 Q1.5 8.5 1.5 7 V3 Q1.5 1.5 3 1.5 Z" fill="none" stroke="#006bb8" stroke-width="1.05" stroke-linejoin="round"/></svg>
<svg class="b" style="left:397px;top:834px;" width="18" height="6" viewBox="0 0 18 6"><rect x="1.5" y="1.5" width="3" height="3" fill="none" stroke="#006bb8" stroke-width="1"/><rect x="7.5" y="1.5" width="3" height="3" fill="none" stroke="#006bb8" stroke-width="1"/><rect x="13.5" y="1.5" width="3" height="3" fill="none" stroke="#006bb8" stroke-width="1"/></svg>
<svg class="b" style="left:427px;top:829px;" width="14" height="16" viewBox="0 0 14 16"><path d="M7 0.6 L13.5 4.3 V11.7 L7 15.4 L0.5 11.7 V4.3 Z" fill="none" stroke="#006bb8" stroke-width="1" stroke-linejoin="round"/><path d="M0.5 4.3 L7 8 L13.5 4.3" fill="none" stroke="#006bb8" stroke-width="1"/></svg>
<div class="t" style="left:461.34px;top:830px;font-size:13px;color:#343741;transform:scaleX(1.0210);transform-origin:0 0;">Mar 31, 2025 @ 14:33:54.532</div>
<div class="t" style="left:661.83px;top:830px;font-size:13px;color:#0b6fbe;transform:scaleX(0.9694);transform-origin:0 0;">SIGMA - Linux Process Creation Web Reverse Shell</div>
<div class="t" style="left:1226.46px;top:830px;font-size:13px;color:#343741;transform:scaleX(1.0344);transform-origin:0 0;">high</div>
<div class="t" style="left:1404.60px;top:830px;font-size:13px;color:#343741;transform:scaleX(1.0784);transform-origin:0 0;">73</div>
<div class="t" style="left:1431.76px;top:830px;font-size:13px;color:#343741;transform:scaleX(0.9947);transform-origin:0 0;">process event with process sh, parent process apache2, by www-data on t...</div>
<div class="b" style="left:280px;top:857px;width:16px;height:16px;box-sizing:border-box;border:1px solid #858b96;border-radius:3px;background:#fff;"></div>
<svg class="b" style="left:314px;top:857px;" width="16" height="16" viewBox="0 0 16 16"><path d="M4.4 11.6 L11.6 4.3 M10.1 1.5 H13.4 Q14.5 1.5 14.5 2.6 V5.6 M1.5 10.2 V13.4 Q1.5 14.5 2.6 14.5 H5.7" fill="none" stroke="#006bb8" stroke-width="1.1" stroke-linecap="round"/></svg>
<svg class="b" style="left:341px;top:857px;" width="17" height="16" viewBox="0 0 17 16"><rect x="6.5" y="0.5" width="4" height="3.5" rx="0.4" fill="none" stroke="#006bb8" stroke-width="1"/><path d="M8.5 4 V7.5 M1 7.5 H16" stroke="#006bb8" stroke-width="1"/><path d="M3.5 6.3 L4.7 7.5 L3.5 8.7 L2.3 7.5 Z M8.5 6.3 L9.7 7.5 L8.5 8.7 L7.3 7.5 Z M13.5 6.3 L14.7 7.5 L13.5 8.7 L12.3 7.5 Z" fill="#fff" stroke="#006bb8" stroke-width="0.9"/><path d="M3.5 8.7 V11 M13.5 8.7 V11" stroke="#006bb8" stroke-width="1"/><rect x="1.5" y="11" width="4" height="3.5" rx="0.4" fill="none" stroke="#006bb8" stroke-width="1"/><rect x="11.5" y="11" width="4" height="3.5" rx="0.4" fill="none" stroke="#006bb8" stroke-width="1"/></svg>
<svg class="b" style="left:369px;top:859px;" width="14" height="13" viewBox="0 0 14 13"><path d="M3 1.5 H11 Q12.5 1.5 12.5 3 V7 Q12.5 8.5 11 8.5 H5.5 L3.5 11 V8.5 H3 Q1.5 8.5 1.5 7 V3 Q1.5 1.5 3 1.5 Z" fill="none" stroke="#006bb8" stroke-width="1.05" stroke-linejoin="round"/></svg>
<svg class="b" style="left:397px;top:862px;" width="18" height="6" viewBox="0 0 18 6"><rect x="1.5" y="1.5" width="3" height="3" fill="none" stroke="#006bb8" stroke-width="1"/><rect x="7.5" y="1.5" width="3" height="3" fill="none" stroke="#006bb8" stroke-width="1"/><rect x="13.5" y="1.5" width="3" height="3" fill="none" stroke="#006bb8" stroke-width="1"/></svg>
<svg class="b" style="left:427px;top:857px;" width="14" height="16" viewBox="0 0 14 16"><path d="M7 0.6 L13.5 4.3 V11.7 L7 15.4 L0.5 11.7 V4.3 Z" fill="none" stroke="#006bb8" stroke-width="1" stroke-linejoin="round"/><path d="M0.5 4.3 L7 8 L13.5 4.3" fill="none" stroke="#006bb8" stroke-width="1"/></svg>
<div class="t" style="left:461.34px;top:858px;font-size:13px;color:#343741;transform:scaleX(1.0206);transform-origin:0 0;">Mar 31, 2025 @ 14:33:54.531</div>
<div class="t" style="left:661.83px;top:858px;font-size:13px;color:#0b6fbe;transform:scaleX(0.9694);transform-origin:0 0;">SIGMA - Linux Process Creation Web Reverse Shell</div>
<div class="t" style="left:1226.46px;top:858px;font-size:13px;color:#343741;transform:scaleX(1.0344);transform-origin:0 0;">high</div>
<div class="t" style="left:1404.60px;top:858px;font-size:13px;color:#343741;transform:scaleX(1.0784);transform-origin:0 0;">73</div>
<div class="t" style="left:1431.76px;top:858px;font-size:13px;color:#343741;transform:scaleX(0.9938);transform-origin:0 0;">process event with process sh, parent process sh, by www-data on tartaru...</div>
<div class="b" style="left:280px;top:885px;width:16px;height:16px;box-sizing:border-box;border:1px solid #858b96;border-radius:3px;background:#fff;"></div>
<svg class="b" style="left:314px;top:885px;" width="16" height="16" viewBox="0 0 16 16"><path d="M4.4 11.6 L11.6 4.3 M10.1 1.5 H13.4 Q14.5 1.5 14.5 2.6 V5.6 M1.5 10.2 V13.4 Q1.5 14.5 2.6 14.5 H5.7" fill="none" stroke="#006bb8" stroke-width="1.1" stroke-linecap="round"/></svg>
<svg class="b" style="left:341px;top:885px;" width="17" height="16" viewBox="0 0 17 16"><rect x="6.5" y="0.5" width="4" height="3.5" rx="0.4" fill="none" stroke="#006bb8" stroke-width="1"/><path d="M8.5 4 V7.5 M1 7.5 H16" stroke="#006bb8" stroke-width="1"/><path d="M3.5 6.3 L4.7 7.5 L3.5 8.7 L2.3 7.5 Z M8.5 6.3 L9.7 7.5 L8.5 8.7 L7.3 7.5 Z M13.5 6.3 L14.7 7.5 L13.5 8.7 L12.3 7.5 Z" fill="#fff" stroke="#006bb8" stroke-width="0.9"/><path d="M3.5 8.7 V11 M13.5 8.7 V11" stroke="#006bb8" stroke-width="1"/><rect x="1.5" y="11" width="4" height="3.5" rx="0.4" fill="none" stroke="#006bb8" stroke-width="1"/><rect x="11.5" y="11" width="4" height="3.5" rx="0.4" fill="none" stroke="#006bb8" stroke-width="1"/></svg>
<svg class="b" style="left:369px;top:887px;" width="14" height="13" viewBox="0 0 14 13"><path d="M3 1.5 H11 Q12.5 1.5 12.5 3 V7 Q12.5 8.5 11 8.5 H5.5 L3.5 11 V8.5 H3 Q1.5 8.5 1.5 7 V3 Q1.5 1.5 3 1.5 Z" fill="none" stroke="#006bb8" stroke-width="1.05" stroke-linejoin="round"/></svg>
<svg class="b" style="left:397px;top:890px;" width="18" height="6" viewBox="0 0 18 6"><rect x="1.5" y="1.5" width="3" height="3" fill="none" stroke="#006bb8" stroke-width="1"/><rect x="7.5" y="1.5" width="3" height="3" fill="none" stroke="#006bb8" stroke-width="1"/><rect x="13.5" y="1.5" width="3" height="3" fill="none" stroke="#006bb8" stroke-width="1"/></svg>
<svg class="b" style="left:427px;top:885px;" width="14" height="16" viewBox="0 0 14 16"><path d="M7 0.6 L13.5 4.3 V11.7 L7 15.4 L0.5 11.7 V4.3 Z" fill="none" stroke="#006bb8" stroke-width="1" stroke-linejoin="round"/><path d="M0.5 4.3 L7 8 L13.5 4.3" fill="none" stroke="#006bb8" stroke-width="1"/></svg>
<div class="t" style="left:461.34px;top:886px;font-size:13px;color:#343741;transform:scaleX(1.0198);transform-origin:0 0;">Mar 31, 2025 @ 14:33:54.530</div>
<div class="t" style="left:661.83px;top:886px;font-size:13px;color:#0b6fbe;transform:scaleX(0.9694);transform-origin:0 0;">SIGMA - Linux Process Creation Web Reverse Shell</div>
<div class="t" style="left:1226.46px;top:886px;font-size:13px;color:#343741;transform:scaleX(1.0344);transform-origin:0 0;">high</div>
<div class="t" style="left:1404.60px;top:886px;font-size:13px;color:#343741;transform:scaleX(1.0784);transform-origin:0 0;">73</div>
<div class="t" style="left:1431.76px;top:886px;font-size:13px;color:#343741;transform:scaleX(0.9938);transform-origin:0 0;">process event with process sh, parent process sh, by www-data on tartaru...</div>
<div class="b" style="left:280px;top:913px;width:16px;height:16px;box-sizing:border-box;border:1px solid #858b96;border-radius:3px;background:#fff;"></div>
<svg class="b" style="left:314px;top:913px;" width="16" height="16" viewBox="0 0 16 16"><path d="M4.4 11.6 L11.6 4.3 M10.1 1.5 H13.4 Q14.5 1.5 14.5 2.6 V5.6 M1.5 10.2 V13.4 Q1.5 14.5 2.6 14.5 H5.7" fill="none" stroke="#006bb8" stroke-width="1.1" stroke-linecap="round"/></svg>
<svg class="b" style="left:341px;top:913px;" width="17" height="16" viewBox="0 0 17 16"><rect x="6.5" y="0.5" width="4" height="3.5" rx="0.4" fill="none" stroke="#006bb8" stroke-width="1"/><path d="M8.5 4 V7.5 M1 7.5 H16" stroke="#006bb8" stroke-width="1"/><path d="M3.5 6.3 L4.7 7.5 L3.5 8.7 L2.3 7.5 Z M8.5 6.3 L9.7 7.5 L8.5 8.7 L7.3 7.5 Z M13.5 6.3 L14.7 7.5 L13.5 8.7 L12.3 7.5 Z" fill="#fff" stroke="#006bb8" stroke-width="0.9"/><path d="M3.5 8.7 V11 M13.5 8.7 V11" stroke="#006bb8" stroke-width="1"/><rect x="1.5" y="11" width="4" height="3.5" rx="0.4" fill="none" stroke="#006bb8" stroke-width="1"/><rect x="11.5" y="11" width="4" height="3.5" rx="0.4" fill="none" stroke="#006bb8" stroke-width="1"/></svg>
<svg class="b" style="left:369px;top:915px;" width="14" height="13" viewBox="0 0 14 13"><path d="M3 1.5 H11 Q12.5 1.5 12.5 3 V7 Q12.5 8.5 11 8.5 H5.5 L3.5 11 V8.5 H3 Q1.5 8.5 1.5 7 V3 Q1.5 1.5 3 1.5 Z" fill="none" stroke="#006bb8" stroke-width="1.05" stroke-linejoin="round"/></svg>
<svg class="b" style="left:397px;top:918px;" width="18" height="6" viewBox="0 0 18 6"><rect x="1.5" y="1.5" width="3" height="3" fill="none" stroke="#006bb8" stroke-width="1"/><rect x="7.5" y="1.5" width="3" height="3" fill="none" stroke="#006bb8" stroke-width="1"/><rect x="13.5" y="1.5" width="3" height="3" fill="none" stroke="#006bb8" stroke-width="1"/></svg>
<svg class="b" style="left:427px;top:913px;" width="14" height="16" viewBox="0 0 14 16"><path d="M7 0.6 L13.5 4.3 V11.7 L7 15.4 L0.5 11.7 V4.3 Z" fill="none" stroke="#006bb8" stroke-width="1" stroke-linejoin="round"/><path d="M0.5 4.3 L7 8 L13.5 4.3" fill="none" stroke="#006bb8" stroke-width="1"/></svg>
<div class="t" style="left:461.34px;top:914px;font-size:13px;color:#343741;transform:scaleX(1.0202);transform-origin:0 0;">Mar 31, 2025 @ 14:33:54.528</div>
<div class="t" style="left:661.83px;top:914px;font-size:13px;color:#0b6fbe;transform:scaleX(0.9694);transform-origin:0 0;">SIGMA - Linux Process Creation Web Reverse Shell</div>
<div class="t" style="left:1226.46px;top:914px;font-size:13px;color:#343741;transform:scaleX(1.0344);transform-origin:0 0;">high</div>
<div class="t" style="left:1404.60px;top:914px;font-size:13px;color:#343741;transform:scaleX(1.0784);transform-origin:0 0;">73</div>
<div class="t" style="left:1431.76px;top:914px;font-size:13px;color:#343741;transform:scaleX(0.9947);transform-origin:0 0;">process event with process sh, parent process apache2, by www-data on t...</div>
<div class="b" style="left:250px;top:925px;width:1656px;height:18px;background:linear-gradient(rgba(255,255,255,0),rgba(243,244,247,0.9));"></div>
<div class="b" style="left:274px;top:935px;width:1608px;height:8px;background:#f0f1f4;"></div>
<div class="b" style="left:284px;top:937px;width:981px;height:6px;background:#adb0b9;"></div>
<svg class="b" style="left:277px;top:937px;" width="4" height="6" viewBox="0 0 4 6"><path d="M3.2 1 L0.6 3 L3.2 5 Z" fill="#a3a6ad"/></svg>
<svg class="b" style="left:1875px;top:937px;" width="4" height="6" viewBox="0 0 4 6"><path d="M0.8 1 L3.4 3 L0.8 5 Z" fill="#a3a6ad"/></svg>
<div class="b" style="left:250px;top:943px;width:1656px;height:1px;background:#d5d8de;"></div>
<div class="b" style="left:249px;top:944px;width:1656px;height:54px;background:#fff;border-left:1px solid #a3aab6;box-shadow:-6px -2px 14px rgba(0,0,0,0.05);"></div>
<svg class="b" style="left:269px;top:963px;" width="17" height="17" viewBox="0 0 17 17"><circle cx="8.5" cy="8.5" r="7.5" fill="none" stroke="#006bb8" stroke-width="1.2"/><path d="M8.5 4 V13 M4 8.5 H13" stroke="#006bb8" stroke-width="1.2"/></svg>
<svg class="b" style="left:299px;top:965px;" width="14" height="14" viewBox="0 0 14 14"><path d="M7 1 L8.8 5 L13 5.3 L9.8 8.1 L10.8 12.5 L7 10.2 L3.2 12.5 L4.2 8.1 L1 5.3 L5.2 5 Z" fill="none" stroke="#98a2b3" stroke-width="1.1" stroke-linejoin="round"/></svg>
<div class="t" style="left:321.23px;top:965px;font-size:15px;color:#0b6fbe;transform:scaleX(1.0360);transform-origin:0 0;-webkit-text-stroke:0.15px #0b6fbe;">Untitled timeline</div>
<div class="b" style="left:444px;top:962px;width:26px;height:20px;background:#d3dae6;border-radius:3px;"></div>
<div class="t" style="left:452.51px;top:966px;font-size:12.5px;color:#1a1c21;transform:scaleX(1.1833);transform-origin:0 0;">0</div>
<div class="b" style="left:474px;top:962px;width:68px;height:20px;background:#fec514;border-radius:3px;"></div>
<div class="t" style="left:481.93px;top:965px;font-size:13px;color:#1a1c21;transform:scaleX(0.9946);transform-origin:0 0;-webkit-text-stroke:0.15px #1a1c21;">Unsaved</div>
</body></html>
